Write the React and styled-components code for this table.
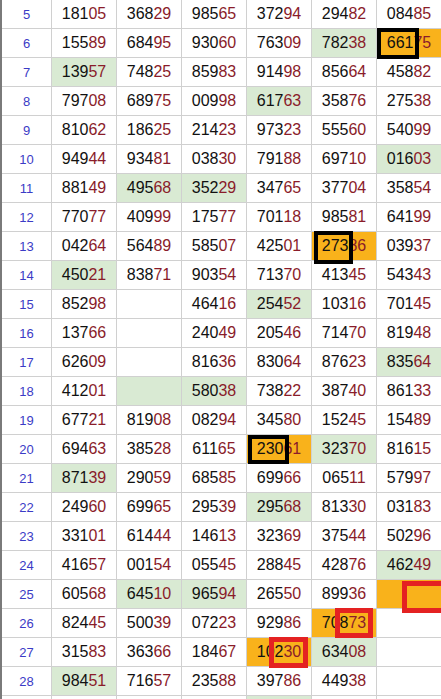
import React from 'react';
import styled, { createGlobalStyle } from 'styled-components';

const Global = createGlobalStyle`
  html, body {
    margin: 0;
    padding: 0;
    background: #ffffff;
    overflow: hidden;
  }
  body {
    font-family: "Liberation Sans", Arial, sans-serif;
  }
`;

const Sheet = styled.div`
  width: 444px;
  border-left: 2px solid #7a7a7a;
  display: flex;
  flex-direction: column;
`;

const Row = styled.div`
  display: grid;
  grid-template-columns: 50px repeat(6, 65px);
  height: 29px;
`;

const IndexCell = styled.div`
  box-sizing: border-box;
  border-right: 1px solid #d0d0d0;
  border-bottom: 1px solid #d0d0d0;
  display: flex;
  align-items: center;
  justify-content: center;
  font-size: 13px;
  color: #3b3bc6;
  background: #ffffff;
`;

const bgMap = { g: '#d9ead3', o: '#f9b21b' };

const Cell = styled.div`
  position: relative;
  box-sizing: border-box;
  border-right: 1px solid #d0d0d0;
  border-bottom: 1px solid #d0d0d0;
  display: flex;
  align-items: center;
  justify-content: center;
  font-size: 16px;
  background: ${(p) => (p.$bg ? bgMap[p.$bg] : '#ffffff')};
`;

const Head = styled.span`
  color: #111111;
`;

const Tail = styled.span`
  color: #8a1c2a;
`;

const Mark = styled.div`
  position: absolute;
  box-sizing: border-box;
  z-index: 2;
  pointer-events: none;
  left: ${(p) => p.$left}px;
  top: ${(p) => p.$top}px;
  width: ${(p) => p.$width}px;
  height: ${(p) => p.$height}px;
  border: ${(p) => (p.$kind === 'red' ? '5px solid #e42222' : '4px solid #000000')};
`;

const G = 'g';
const O = 'o';

const rows = [
  [5, ['18105', '36829', '98565', '37294', '29482', '08485']],
  [6, ['15589', '68495', '93060', '76309', { v: '78238', bg: G }, { v: '66175', bg: O, box: { kind: 'black', left: 0, top: -1, width: 42, height: 31 } }]],
  [7, [{ v: '13957', bg: G }, '74825', '85983', '91498', '85664', '45882']],
  [8, ['79708', '68975', '00998', { v: '61763', bg: G }, '35876', '27538']],
  [9, ['81062', '18625', '21423', '97323', '55560', '54099']],
  [10, ['94944', '93481', '03830', '79188', '69710', { v: '01603', bg: G }]],
  [11, ['88149', { v: '49568', bg: G }, { v: '35229', bg: G }, '34765', '37704', '35854']],
  [12, ['77077', '40999', '17577', '70118', '98581', '64199']],
  [13, ['04264', '56489', '58507', '42501', { v: '27386', bg: O, box: { kind: 'black', left: 2, top: -1, width: 39, height: 33 } }, '03937']],
  [14, [{ v: '45021', bg: G }, '83871', '90354', '71370', '41345', '54343']],
  [15, ['85298', '', '46416', { v: '25452', bg: G }, '10316', '70145']],
  [16, ['13766', '', '24049', '20546', '71470', '81948']],
  [17, ['62609', '', '81636', '83064', '87623', { v: '83564', bg: G }]],
  [18, ['41201', { v: '', bg: G }, { v: '58038', bg: G }, '73822', '38740', '86133']],
  [19, ['67721', '81908', '08294', '34580', '15245', '15489']],
  [20, ['69463', '38528', '61165', { v: '23061', bg: O, box: { kind: 'black', left: 1, top: 0, width: 41, height: 29 } }, { v: '32370', bg: G }, '81615']],
  [21, [{ v: '87139', bg: G }, '29059', '68585', '69966', '06511', '57997']],
  [22, ['24960', '69965', '29539', { v: '29568', bg: G }, '81330', '03183']],
  [23, ['33101', '61444', '14613', '32369', '37544', '50296']],
  [24, ['41657', '00154', '05545', '28845', '42876', { v: '46249', bg: G }]],
  [25, ['60568', { v: '64510', bg: G }, { v: '96594', bg: G }, '26550', '89936', { v: '', bg: O, box: { kind: 'red', left: 25, top: 1, width: 60, height: 32 } }]],
  [26, ['82445', '50039', '07223', '92986', { v: '70873', bg: O, box: { kind: 'red', left: 23, top: -1, width: 38, height: 30 } }, '']],
  [27, ['31583', '36366', '18467', { v: '10230', bg: O, box: { kind: 'red', left: 22, top: -1, width: 39, height: 31 } }, { v: '63408', bg: G }, '']],
  [28, [{ v: '98451', bg: G }, '71657', '23588', '39786', '44938', '']],
  ['', ['', '', '', { v: '', bg: G }, '', '']],
];

function Value({ v }) {
  if (!v) return null;
  return (
    <>
      <Head>{v.slice(0, 3)}</Head>
      <Tail>{v.slice(3)}</Tail>
    </>
  );
}

export default function App() {
  return (
    <>
      <Global />
      <Sheet>
        {rows.map(([idx, cells], r) => (
          <Row key={r}>
            <IndexCell>{idx}</IndexCell>
            {cells.map((c, i) => {
              const cell = typeof c === 'string' ? { v: c } : c;
              return (
                <Cell key={i} $bg={cell.bg}>
                  <Value v={cell.v} />
                  {cell.box && (
                    <Mark
                      $kind={cell.box.kind}
                      $left={cell.box.left}
                      $top={cell.box.top}
                      $width={cell.box.width}
                      $height={cell.box.height}
                    />
                  )}
                </Cell>
              );
            })}
          </Row>
        ))}
      </Sheet>
    </>
  );
}
